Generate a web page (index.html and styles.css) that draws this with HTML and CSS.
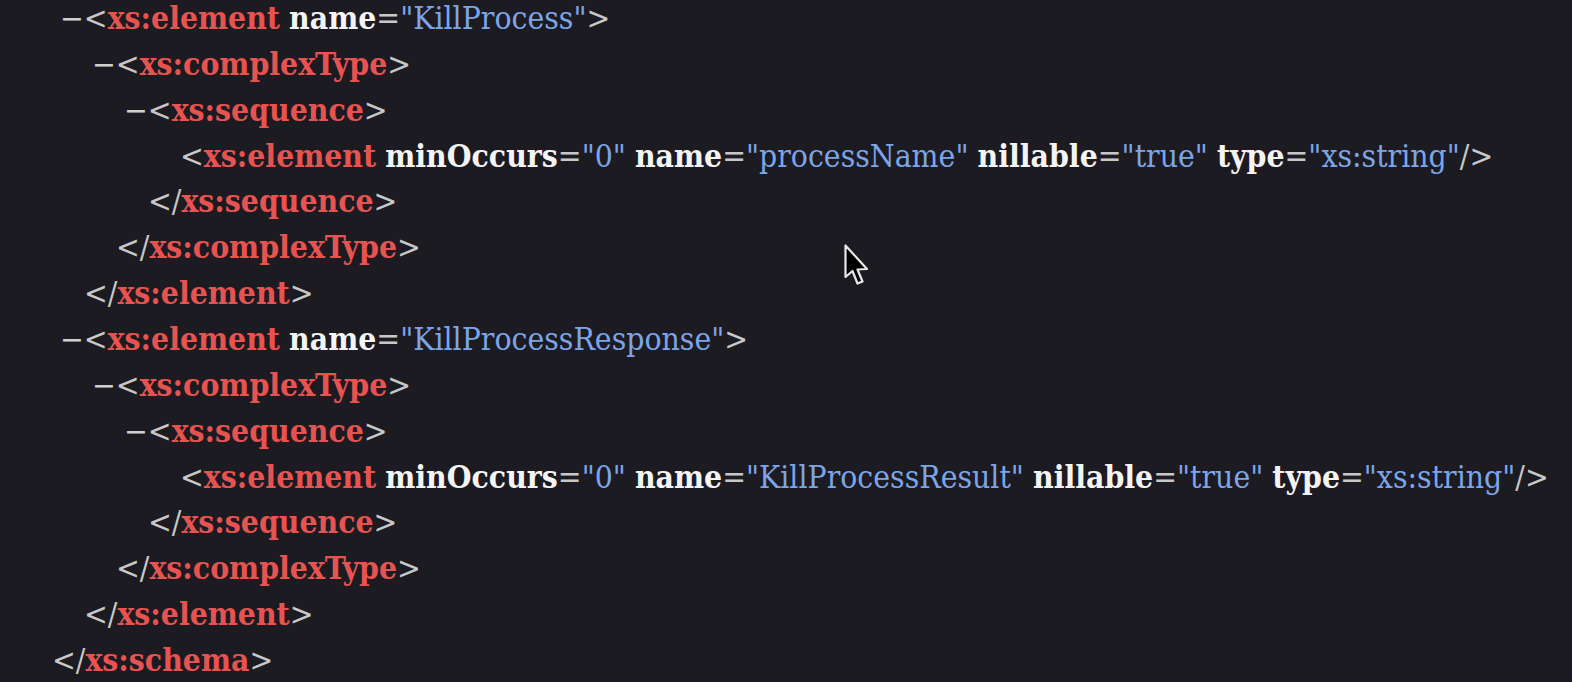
FILE: index.html
```html
<!DOCTYPE html>
<html>
<head>
<meta charset="utf-8">
<link rel="stylesheet" href="styles.css">
</head>
<body>
<div class="tree">
  <div class="ln i1"><span class="m">−</span><span class="p">&lt;</span><span class="t">xs:element</span> <span class="a">name</span><span class="p">=</span><span class="v">"KillProcess"</span><span class="p">&gt;</span></div>
  <div class="ln i2"><span class="m">−</span><span class="p">&lt;</span><span class="t">xs:complexType</span><span class="p">&gt;</span></div>
  <div class="ln i3"><span class="m">−</span><span class="p">&lt;</span><span class="t">xs:sequence</span><span class="p">&gt;</span></div>
  <div class="ln i4"><span class="p">&lt;</span><span class="t">xs:element</span> <span class="a">minOccurs</span><span class="p">=</span><span class="v">"0"</span> <span class="a">name</span><span class="p">=</span><span class="v">"processName"</span> <span class="a">nillable</span><span class="p">=</span><span class="v">"true"</span> <span class="a">type</span><span class="p">=</span><span class="v">"xs:string"</span><span class="p">/&gt;</span></div>
  <div class="ln c3"><span class="p">&lt;/</span><span class="t">xs:sequence</span><span class="p">&gt;</span></div>
  <div class="ln c2"><span class="p">&lt;/</span><span class="t">xs:complexType</span><span class="p">&gt;</span></div>
  <div class="ln c1"><span class="p">&lt;/</span><span class="t">xs:element</span><span class="p">&gt;</span></div>
  <div class="ln i1"><span class="m">−</span><span class="p">&lt;</span><span class="t">xs:element</span> <span class="a">name</span><span class="p">=</span><span class="v">"KillProcessResponse"</span><span class="p">&gt;</span></div>
  <div class="ln i2"><span class="m">−</span><span class="p">&lt;</span><span class="t">xs:complexType</span><span class="p">&gt;</span></div>
  <div class="ln i3"><span class="m">−</span><span class="p">&lt;</span><span class="t">xs:sequence</span><span class="p">&gt;</span></div>
  <div class="ln i4"><span class="p">&lt;</span><span class="t">xs:element</span> <span class="a">minOccurs</span><span class="p">=</span><span class="v">"0"</span> <span class="a">name</span><span class="p">=</span><span class="v">"KillProcessResult"</span> <span class="a">nillable</span><span class="p">=</span><span class="v">"true"</span> <span class="a">type</span><span class="p">=</span><span class="v">"xs:string"</span><span class="p">/&gt;</span></div>
  <div class="ln c3"><span class="p">&lt;/</span><span class="t">xs:sequence</span><span class="p">&gt;</span></div>
  <div class="ln c2"><span class="p">&lt;/</span><span class="t">xs:complexType</span><span class="p">&gt;</span></div>
  <div class="ln c1"><span class="p">&lt;/</span><span class="t">xs:element</span><span class="p">&gt;</span></div>
  <div class="ln c0"><span class="p">&lt;/</span><span class="t">xs:schema</span><span class="p">&gt;</span></div>
</div>
<svg class="cursor" width="28" height="44" viewBox="0 0 28 44">
  <path d="M2.5 1.5 L2.5 33 L9.5 27 L14.5 39.5 L19.5 37.5 L14.5 25.5 L24 25 Z" fill="#000" stroke="#e8e8e8" stroke-width="2.2" stroke-linejoin="round"/>
</svg>
</body>
</html>
```
FILE: styles.css
```css
html, body {
  margin: 0;
  padding: 0;
  background: #1c1b22;
  height: 100%;
  overflow: hidden;
}
body {
  position: relative;
}
.tree {
  margin-top: -5px;
  font-family: "DejaVu Serif", "Liberation Serif", serif;
  font-stretch: condensed;
  font-size: 31.6px;
  line-height: 45.86px;
  white-space: nowrap;
}
.ln {
  display: block;
  height: 45.86px;
}
.i1 { padding-left: 60px; }
.i2 { padding-left: 92px; }
.i3 { padding-left: 124px; }
.i4 { padding-left: 180px; }
.c3 { padding-left: 148px; }
.c2 { padding-left: 116px; }
.c1 { padding-left: 84px; }
.c0 { padding-left: 52px; }
.m { color: #d0d0d0; }
.p { color: #c8c8c8; }
.t { color: #e65350; font-weight: bold; }
.a { color: #f4f4f4; font-weight: bold; }
.v { color: #7ca5e8; }
.cursor {
  position: absolute;
  left: 843px;
  top: 244px;
}
```
